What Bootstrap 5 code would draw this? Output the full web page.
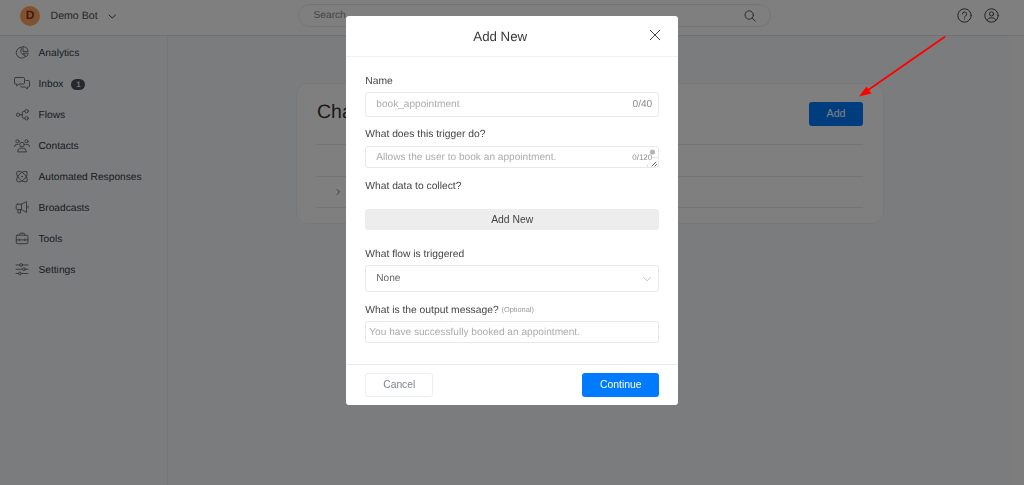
<!DOCTYPE html>
<html lang="en">
<head>
    <meta charset="UTF-8">
    <meta name="viewport" content="width=device-width, initial-scale=1.0">
    <title>Demo Bot</title>
    <link href="https://cdn.jsdelivr.net/npm/bootstrap@5.3.0/dist/css/bootstrap.min.css" rel="stylesheet">
    <style>
        body {
            font-family: "Liberation Sans", Arial, sans-serif;
            font-size: 10.6px;
            line-height: 15px;
            color: #39424d;
            background: #f7f9fd;
            height: 100vh;
            overflow: hidden;
            text-rendering: geometricPrecision;
        }
        svg { fill: none; stroke: currentColor; stroke-linecap: round; stroke-linejoin: round; flex: none; }

        /* top bar */
        .topbar { height: 35px; padding: 0 25px 4px 20px; background: #fff; box-shadow: 0 1px 1px #e2e4e8; z-index: 1; }
        .bot-avatar { width: 20px; height: 20px; background: #ffa564; color: #8a3212; font-size: 12px; font-weight: bold; }
        .bot-name { width: 52px; margin-left: 10.5px; padding-top: 1px; color: #4b4b4b; }
        .search-pill { width: 473px; height: 23px; margin-left: 181px; padding: 0 14px 0 15px; border: 1px solid #ebebeb; font-size: 10.2px; color: #8a8a8a; }
        .search-pill svg { color: #555; }
        .top-icons { gap: 12px; color: #444; }

        /* left menu */
        .side-menu { width: 168px; padding-top: 2.5px; border-right: 1px solid #eceef2; flex: none; }
        .side-menu .nav-link { height: 31px; padding: 0 0 0 14px; font-size: 10.2px; color: #303944; }
        .side-menu svg { width: 16px; height: 16px; margin-right: 8.5px; color: #666; stroke-width: .9; }
        .inbox-count { width: 14px; height: 11px; margin-left: 8px; background: #4b5059; color: #e8e8e8; font-size: 8px; line-height: 11px; font-weight: bold; }

        /* page */
        .page-area { padding: 48px 128px 0 128px; }
        .gutter { width: 12px; background: #fafbfd; flex: none; }
        .tool-card { height: 141px; padding: 0 20px 0 19px; background: #fff; border: 1px solid #f0f1f5; border-radius: 12px; }
        .tool-head { height: 60px; }
        .tool-head h2 { font-size: 19.5px; padding: 0 0 3px 1px; color: #333; }
        .tool-row { height: 31.5px; border-top: 1px solid #e8e8e8; }
        .tool-row.last { border-bottom: 1px solid #e8e8e8; height: 32.5px; color: #777; }
        .btn-add { width: 54px; height: 24px; padding: 0; background: #007bff; color: #fff; font-size: 10.6px; border: 0; border-radius: 3px; }

        /* dialog */
        .modal-backdrop { --bs-backdrop-opacity: .5; }
        .trigger-modal { font-size: 10.3px; }
        .pointer-arrow { position: fixed; left: 850px; top: 30px; z-index: 1060; }
        .trigger-dialog { width: 332.5px; margin: 16px auto 0; padding-left: .5px; }
        .trigger-dialog .modal-content { height: 389px; border: 0; border-radius: 3px; color: #444; }
        .trigger-dialog .modal-header { height: 41px; padding: 0 17px 2px 19px; border-color: #eff0f2; }
        .trigger-dialog .modal-title { font-size: 13.3px; font-weight: 400; line-height: 16px; padding: 4px 14px 0 0; color: #3a3a3a; }
        .trigger-dialog .modal-body { padding: 17px 19px 0; }
        .trigger-dialog .modal-footer { height: 41px; padding: 0 19px; border-color: #e9eaee; }
        .trigger-dialog .modal-footer > * { margin: 0; }
        .field-label { display: block; height: 15px; }
        .field-box { border: 1px solid #e9e9ec; border-radius: 3px; padding: 0 6px 0 10px; color: #acacac; font-size: 10.15px; background: #fff; }
        .field-name { height: 24.5px; margin: 3px 0 10px; }
        .field-desc { height: 22px; margin: 4px 0 11px; padding-top: 1px; padding-right: 0; }
        .field-select { height: 27px; margin: 3px 0 10px; color: #666; }
        .field-select svg { color: #c4c4c4; }
        .field-output { height: 21.5px; margin-top: 4px; padding: 1px 0 0 3px; }
        .counter { color: #8d8d8d; }
        .counter-small { font-size: 8px; color: #8d8d8d; padding-left: 5px; }
        .grip { margin: -1px 0 0 -5px; }
        .btn-data { height: 21px; margin: 15px 0 17.5px; padding: 1px 0 0; font-size: 10.4px; background: #ededed; color: #444; border: 0; border-radius: 3px; }
        .optional { font-size: 7.4px; color: #999; vertical-align: 1px; }
        .btn-cancel { width: 68px; height: 23.5px; padding: 0; font-size: 10.3px; border: 1px solid #eceef2; border-radius: 3px; color: #7e858d; }
        .btn-continue { width: 77px; height: 23.5px; padding: 0; font-size: 10.4px; background: #007bff; color: #fff; border: 0; border-radius: 3px; }
    </style>
</head>
<body class="d-flex flex-column">
    <header class="topbar d-flex align-items-center position-relative">
        <span class="bot-avatar rounded-circle d-flex align-items-center justify-content-center">D</span>
        <span class="bot-name text-nowrap">Demo Bot</span>
        <svg class="ms-1" width="10" height="10" viewBox="0 0 10 10"><path d="M2 4l3.200 3L8.500 4"/></svg>
        <div class="search-pill rounded-pill d-flex align-items-center justify-content-between">
            <span>Search</span>
            <svg width="12" height="12" viewBox="0 0 12 12"><circle cx="5.200" cy="5" r="4.200"/><path d="M8.300 8.200l3 3"/></svg>
        </div>
        <div class="top-icons d-flex ms-auto">
            <svg width="15" height="15" viewBox="0 0 15 15"><circle cx="7.500" cy="7.500" r="6.700"/><path d="M5.400 6a2.100 2.100 0 1 1 3.100 1.900c-.7.4-1 .7-1 1.300M7.500 10.900v.2"/></svg>
            <svg width="15" height="15" viewBox="0 0 15 15"><circle cx="7.500" cy="7.500" r="6.700"/><circle cx="7.500" cy="5.900" r="2.100"/><path d="M3.300 12.500c.3-2 1.700-2.700 4.200-2.700s3.900.7 4.200 2.700"/></svg>
        </div>
    </header>

    <div class="d-flex flex-grow-1">
        <nav class="side-menu nav flex-column flex-nowrap">
            <a class="nav-link d-flex align-items-center" href="#">
                <svg viewBox="0 0 16 16"><path d="M7 2.200a5.500 5.500 0 1 0 4.300 9.600L7 7.500z"/><path d="M9 1.600v4.800h5.100A5.200 5.200 0 0 0 9 1.600zM9.300 8.200h4.800a5 5 0 0 1-1.500 3.300z"/></svg>
                Analytics
            </a>
            <a class="nav-link d-flex align-items-center" href="#">
                <svg viewBox="0 0 16 16"><path d="M1.500 1.500h8q1 0 1 1V7q0 1-1 1H5L2.800 10V8H1.500q-1 0-1-1V2.500q0-1 1-1z"/><path d="M12 4.500h2.500q1 0 1 1V10q0 1-1 1h-1.200v2l-2.200-2H7.500q-1 0-1-1"/></svg>
                Inbox
                <span class="inbox-count rounded-pill text-center">1</span>
            </a>
            <a class="nav-link d-flex align-items-center" href="#">
                <svg viewBox="0 0 16 16"><circle cx="4" cy="7.700" r="1.700"/><circle cx="12.600" cy="4.200" r="1.700"/><circle cx="12.600" cy="11.300" r="1.700"/><path d="M5.700 7.700h2.600M10.900 4.200h-1.100q-1.500 0-1.500 1.500v4.100q0 1.500 1.500 1.500h1.100"/></svg>
                Flows
            </a>
            <a class="nav-link d-flex align-items-center" href="#">
                <svg viewBox="0 0 16 16"><circle cx="8" cy="6.600" r="2.300"/><path d="M3.700 13.500q0-3.300 3-3.300h2.600q3 0 3 3.300z"/><circle cx="3.500" cy="3.300" r="1.600"/><circle cx="12.500" cy="3.300" r="1.600"/><path d="M.5 8.500q0-2 2-2h1.500M15.500 8.500q0-2-2-2H12"/></svg>
                Contacts
            </a>
            <a class="nav-link d-flex align-items-center" href="#">
                <svg viewBox="0 0 16 16"><ellipse cx="8" cy="7.600" rx="6.800" ry="3.400" transform="rotate(45 8 7.600)"/><ellipse cx="8" cy="7.600" rx="6.800" ry="3.400" transform="rotate(-45 8 7.600)"/><circle cx="8" cy="7.600" r=".5"/></svg>
                Automated Responses
            </a>
            <a class="nav-link d-flex align-items-center" href="#">
                <svg viewBox="0 0 16 16"><path d="M3.500 4.200h4l5-2.700v11l-5-2.800h-4q-1.300 0-1.300-1.300V5.500q0-1.300 1.300-1.300zM7.500 4.200V9.700M4 9.700V13h2.500V9.700M14 6v2"/></svg>
                Broadcasts
            </a>
            <a class="nav-link d-flex align-items-center" href="#">
                <svg viewBox="0 0 16 16"><rect x="2.300" y="4.200" width="11.600" height="8.500" rx="1"/><path d="M5.300 4.200l.8-2h4l.8 2M2.300 8.900h11.600M5.300 8v1.800M10.900 8v1.800"/></svg>
                Tools
            </a>
            <a class="nav-link d-flex align-items-center" href="#">
                <svg viewBox="0 0 16 16"><path d="M2 3h3.700M8.500 3h5.500M2 7.200h6.500M11.300 7.200H14M2 11.500h2.500M7.300 11.500H14"/><circle cx="7.100" cy="3" r="1.400"/><circle cx="9.900" cy="7.200" r="1.400"/><circle cx="5.900" cy="11.500" r="1.400"/></svg>
                Settings
            </a>
        </nav>

        <main class="page-area flex-grow-1">
            <section class="tool-card">
                <div class="tool-head d-flex align-items-center justify-content-between">
                    <h2 class="m-0 fw-normal">Cha</h2>
                    <button type="button" class="btn btn-add">Add</button>
                </div>
                <div class="tool-row"></div>
                <div class="tool-row last d-flex align-items-center">
                    <svg width="10" height="10" viewBox="0 0 10 10" class="ms-3"><path d="M5 2.500l2.500 2.500l-2.500 2.500"/></svg>
                </div>
            </section>
        </main>
        <div class="gutter"></div>
    </div>

    <div class="modal-backdrop show"></div>
    <div class="modal trigger-modal d-block" tabindex="-1">
        <div class="modal-dialog trigger-dialog">
            <div class="modal-content">
                <div class="modal-header">
                    <h5 class="modal-title flex-grow-1 text-center">Add New</h5>
                    <svg width="12" height="12" viewBox="0 0 12 12"><path d="M1.200 1.200l9.600 9.600M10.800 1.200l-9.600 9.600"/></svg>
                </div>
                <div class="modal-body">
                    <span class="field-label">Name</span>
                    <div class="field-box field-name d-flex align-items-center justify-content-between">
                        <span>book_appointment</span>
                        <span class="counter">0/40</span>
                    </div>
                    <span class="field-label">What does this trigger do?</span>
                    <div class="field-box field-desc d-flex align-items-center">
                        <span class="me-auto">Allows the user to book an appointment.</span>
                        <span class="counter-small">0/120</span>
                        <!-- scroll thumb and resize grip -->
                        <svg class="grip" width="11" height="20" viewBox="0 0 11 20"><circle cx="5.500" cy="5" r="2.600" fill="#b5b5ba" stroke="none"/><path d="M5 10.500h6M.5 18v2" stroke="#ddd" stroke-width=".8"/><path d="M5 19l4-4M8 19l1.500-1.500" stroke="#555" stroke-width=".9"/></svg>
                    </div>
                    <span class="field-label">What data to collect?</span>
                    <button type="button" class="btn btn-data w-100 d-block">Add New</button>
                    <span class="field-label">What flow is triggered</span>
                    <div class="field-box field-select d-flex align-items-center justify-content-between">
                        <span>None</span>
                        <svg width="10" height="10" viewBox="0 0 10 10"><path d="M1.500 3.500l3.500 3.300l3.500-3.300"/></svg>
                    </div>
                    <span class="field-label">What is the output message? <span class="optional">(Optional)</span></span>
                    <div class="field-box field-output d-flex align-items-center">You have successfully booked an appointment.</div>
                </div>
                <div class="modal-footer justify-content-between">
                    <button type="button" class="btn btn-cancel">Cancel</button>
                    <button type="button" class="btn btn-continue">Continue</button>
                </div>
            </div>
        </div>
    </div>

    <svg class="pointer-arrow" width="100" height="70" viewBox="0 0 100 70">
        <path d="M94.500 7L16 61.500" stroke="#f00" stroke-width="1.900"/>
        <path d="M9 66.500L16.500 56.500L21.500 63.500z" fill="#f00" stroke="none"/>
    </svg>

    <script src="https://cdn.jsdelivr.net/npm/bootstrap@5.3.0/dist/js/bootstrap.bundle.min.js"></script>
</body>
</html>
